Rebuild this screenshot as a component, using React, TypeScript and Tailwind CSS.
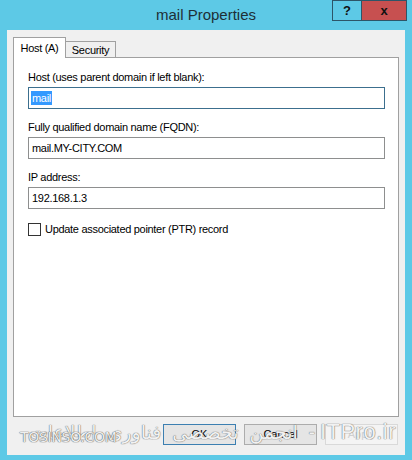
import React from "react";

const font = "font-['Liberation_Sans',Arial,sans-serif]";

function Field({ label, value, selected, focused }: { label: string; value: string; selected?: boolean; focused?: boolean }) {
  return (
    <div className="flex flex-col">
      <div className="h-[15px] leading-[15px] text-[11px] tracking-[-0.3px] text-[#000] mb-[2px]">{label}</div>
      <div
        className={
          "h-[22px] w-[357px] bg-white border flex items-center pl-[2px] text-[11px] tracking-[-0.3px] " +
          (focused ? "border-[#3c6f8e]" : "border-[#8e8f8f]")
        }
      >
        {selected ? (
          <span className="bg-[#3399ff] text-white px-[1px] leading-[14px]">{value}</span>
        ) : (
          <span className="text-black px-[1px]">{value}</span>
        )}
      </div>
    </div>
  );
}

export default function App() {
  return (
    <div className={"w-[412px] h-[460px] bg-[#5dc9e6] flex flex-col relative overflow-hidden " + font}>
      {/* Title bar */}
      <div className="h-[30px] grid grid-cols-[1fr_auto_1fr] items-start">
        <div />
        <div className="pt-[4px] text-[15px] leading-[22px] text-[#1e2f36]">mail Properties</div>
        <div className="flex justify-end pr-[5px]">
          <div className="w-[29px] h-[21px] border border-[#2d5568] border-r-0 flex items-center justify-center text-[13px] font-bold text-[#111]">?</div>
          <div className="w-[46px] h-[21px] border border-[#2d5568] bg-[#c75050] flex items-center justify-center text-[13px] font-bold text-[#111]">x</div>
        </div>
      </div>

      {/* Body */}
      <div className="mx-[7px] mb-[5px] flex-1 bg-[#f0f0f0] flex flex-col px-[6px] pt-[7px]">
        {/* Tabs */}
        <div className="flex items-end h-[20px] relative z-10">
          <div className="w-[53px] h-[21px] bg-white border border-[#a0a0a0] border-b-0 flex items-start justify-center pt-[2px] text-[11px] tracking-[-0.3px] -mb-[1px]">
            Host (A)
          </div>
          <div className="w-[50px] h-[16px] bg-[#f0f0f0] border border-[#a0a0a0] border-l-0 border-b-0 flex items-center justify-center text-[11px] tracking-[-0.3px] pt-[2px]">
            Security
          </div>
        </div>
        {/* Panel */}
        <div className="h-[360px] bg-white border border-[#a0a0a0] flex flex-col pl-[14px] pt-[12px] gap-[11px]">
          <Field label="Host (uses parent domain if left blank):" value="mail" selected focused />
          <Field label="Fully qualified domain name (FQDN):" value="mail.MY-CITY.COM" />
          <Field label="IP address:" value="192.168.1.3" />
          <div className="flex items-center gap-[4px] mt-[1px]">
            <div className="w-[13px] h-[13px] border border-[#333] bg-white" />
            <span className="text-[11px] tracking-[-0.3px]">Update associated pointer (PTR) record</span>
          </div>
        </div>
        {/* Buttons */}
        <div className="flex justify-end gap-[8px] mt-[7px] pr-[1px]">
          <div className="w-[73px] h-[21px] border border-[#3c7fb1] bg-[#e5e5e5] flex items-center justify-center text-[11px]">OK</div>
          <div className="w-[73px] h-[21px] border border-[#acacac] bg-[#e5e5e5] flex items-center justify-center text-[11px]">Cancel</div>
          <div className="w-[73px] h-[21px] border border-[#d9d9d9] bg-[#f4f4f4] flex items-center justify-center text-[11px] text-[#d0d0d0]">Apply</div>
        </div>
      </div>

      {/* Watermark overlays */}
      <div
        dir="rtl"
        className="absolute top-[420px] right-[16px] h-[24px] flex items-center gap-[5px] whitespace-nowrap text-[#f2f2f2] [text-shadow:0_0_1px_#6d6d6d,0_0_1px_#6d6d6d]"
      >
        <span className="text-[22px] leading-[24px] tracking-[0.5px] font-['Liberation_Sans',sans-serif]">ITPro.ir</span>
        <span className="text-[19px] leading-[24px] font-['Noto_Sans','DejaVu_Sans',sans-serif] [word-spacing:6px]">- انجمن تخصصی فناوری اطلاعات</span>
      </div>
      <div className="absolute top-[428px] left-[20px] text-[14px] leading-[18px] text-[#efefef] [text-shadow:0_0_1px_#555,0_0_1px_#555] font-['DejaVu_Sans',sans-serif] tracking-[-0.3px]">
        TOSINSO.COM
      </div>
    </div>
  );
}
